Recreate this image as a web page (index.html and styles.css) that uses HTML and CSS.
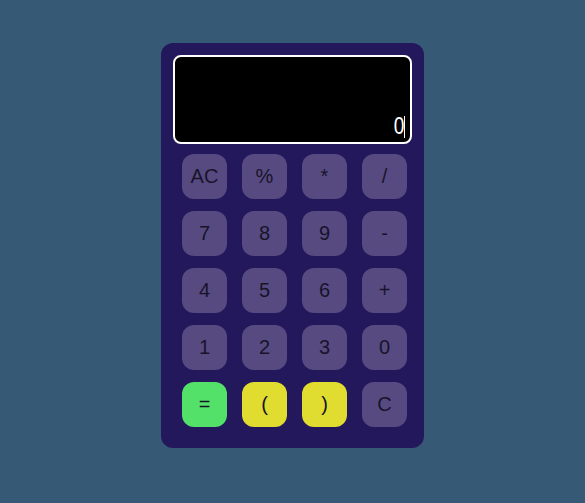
FILE: index.html
```html
<!DOCTYPE html>
<html>
<head>
<meta charset="utf-8">
<link rel="stylesheet" href="styles.css">
</head>
<body>
<div class="calc">
  <div class="display"><span class="value">0</span><span class="caret"></span></div>
  <div class="keys">
    <div class="key">AC</div><div class="key">%</div><div class="key">*</div><div class="key">/</div>
    <div class="key">7</div><div class="key">8</div><div class="key">9</div><div class="key">-</div>
    <div class="key">4</div><div class="key">5</div><div class="key">6</div><div class="key">+</div>
    <div class="key">1</div><div class="key">2</div><div class="key">3</div><div class="key">0</div>
    <div class="key eq">=</div><div class="key paren">(</div><div class="key paren">)</div><div class="key">C</div>
  </div>
</div>
</body>
</html>
```
FILE: styles.css
```css
html, body {
  margin: 0;
  padding: 0;
}
body {
  background: #365a75;
  width: 585px;
  height: 503px;
  font-family: "Liberation Sans", Arial, sans-serif;
}
.calc {
  position: relative;
  margin: 43px 0 0 161px;
  width: 263px;
  height: 405px;
  box-sizing: border-box;
  background: #23185b;
  border-radius: 12px;
  padding: 12px 12px 21px 12px;
}
.display {
  height: 89px;
  box-sizing: border-box;
  border: 2px solid #ffffff;
  border-radius: 8px;
  background: #000;
  display: flex;
  justify-content: flex-end;
  align-items: flex-end;
  padding: 0 5px 4px 0;
  overflow: hidden;
}
.value {
  color: #fff;
  font-size: 24px;
  line-height: 24px;
  transform: scaleX(0.8);
  transform-origin: right bottom;
}
.caret {
  width: 1px;
  height: 22px;
  background: #fff;
}
.keys {
  margin-top: 10px;
  padding-left: 9px;
  display: grid;
  grid-template-columns: repeat(4, 45px);
  grid-auto-rows: 45px;
  column-gap: 15px;
  row-gap: 12px;
}
.key {
  background: #574a81;
  border-radius: 12px;
  display: flex;
  align-items: center;
  justify-content: center;
  font-size: 20px;
  color: #17142a;
}
.key.eq {
  background: #53e16a;
}
.key.paren {
  background: #e0dd30;
}
```
